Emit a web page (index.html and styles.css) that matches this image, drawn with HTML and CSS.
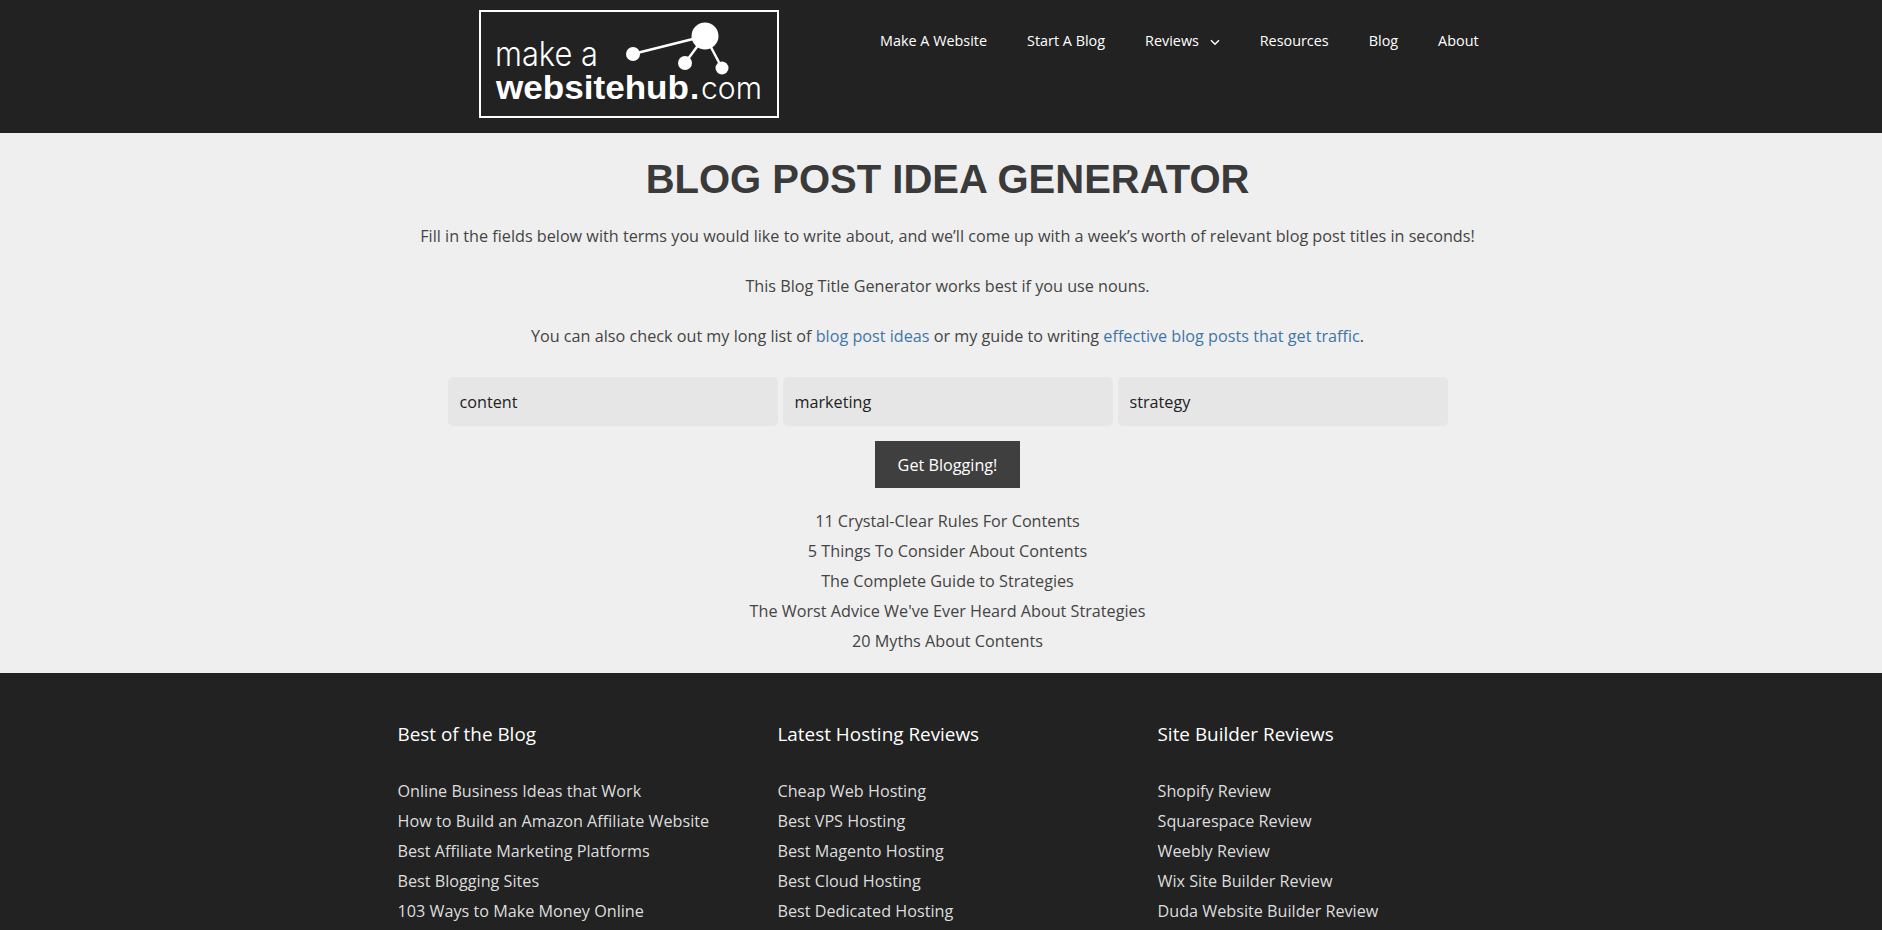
FILE: index.html
```html
<!DOCTYPE html>
<html>
    <head>
        <meta name='viewport' content='width=device-width, initial-scale=1.0'>
        <title>Blog Post Idea Generator</title>
        <link rel="stylesheet" href="styles.css">
    </head>
    <body>
        <header class="site-header">
            <a class="logo" href="#">
                <svg width="300" height="108" viewBox="0 0 300 108">
                    <rect x="1" y="1" width="298" height="106" fill="none" stroke="#fff" stroke-width="2"/>
                    <path d="M154 44L226 26M226 26L206 53M226 26L243 58" stroke="#fff" stroke-width="2.5" fill="none"/>
                    <circle cx="226" cy="26" r="13.5" fill="#fff"/>
                    <circle cx="154" cy="44" r="7" fill="#fff"/>
                    <circle cx="206" cy="53" r="7" fill="#fff"/>
                    <circle cx="243" cy="58" r="6.5" fill="#fff"/>
                    <text class="logo-light" x="16" y="56" font-size="34" textLength="103" lengthAdjust="spacingAndGlyphs">make a</text>
                    <text class="logo-bold" x="17" y="89" font-size="33" textLength="193" lengthAdjust="spacingAndGlyphs">websitehub</text>
                    <text class="logo-bold" x="211" y="89" font-size="33">.</text>
                    <text class="logo-light" x="222" y="89" font-size="31" textLength="61" lengthAdjust="spacingAndGlyphs">com</text>
                </svg>
            </a>
            <nav class="main-nav">
                <a href="#">Make A Website</a>
                <a href="#">Start A Blog</a>
                <a href="#" class="has-sub">Reviews
                    <svg width="10" height="7" viewBox="0 0 10 7"><path d="M1 1.2L5 5.2L9 1.2" stroke="#fff" stroke-width="1.5" fill="none"/></svg>
                </a>
                <a href="#">Resources</a>
                <a href="#">Blog</a>
                <a href="#">About</a>
            </nav>
        </header>
        <main class="generator">
            <h1>BLOG POST IDEA GENERATOR</h1>
            <p>Fill in the fields below with terms you would like to write about, and we’ll come up with a week’s worth of relevant blog post titles in seconds!</p>
            <p>This Blog Title Generator works best if you use nouns.</p>
            <p>You can also check out my long list of <a href="#">blog post ideas</a> or my guide to writing <a href="#">effective blog posts that get traffic</a>.</p>
            <div class="terms">
                <input type="text" value="content">
                <input type="text" value="marketing">
                <input type="text" value="strategy">
            </div>
            <button>Get Blogging!</button>
            <ul class="results">
                <li>11 Crystal-Clear Rules For Contents</li>
                <li>5 Things To Consider About Contents</li>
                <li>The Complete Guide to Strategies</li>
                <li>The Worst Advice We've Ever Heard About Strategies</li>
                <li>20 Myths About Contents</li>
            </ul>
        </main>
        <footer class="site-footer">
            <div class="foot-col">
                <h4>Best of the Blog</h4>
                <a href="#">Online Business Ideas that Work</a>
                <a href="#">How to Build an Amazon Affiliate Website</a>
                <a href="#">Best Affiliate Marketing Platforms</a>
                <a href="#">Best Blogging Sites</a>
                <a href="#">103 Ways to Make Money Online</a>
            </div>
            <div class="foot-col">
                <h4>Latest Hosting Reviews</h4>
                <a href="#">Cheap Web Hosting</a>
                <a href="#">Best VPS Hosting</a>
                <a href="#">Best Magento Hosting</a>
                <a href="#">Best Cloud Hosting</a>
                <a href="#">Best Dedicated Hosting</a>
            </div>
            <div class="foot-col">
                <h4>Site Builder Reviews</h4>
                <a href="#">Shopify Review</a>
                <a href="#">Squarespace Review</a>
                <a href="#">Weebly Review</a>
                <a href="#">Wix Site Builder Review</a>
                <a href="#">Duda Website Builder Review</a>
            </div>
        </footer>
    </body>
</html>
```
FILE: styles.css
```css
html, body {
    margin: 0;
    height: 930px;
    overflow: hidden;
}
body {
    font-family: "Open Sans", sans-serif;
    font-size: 16.2px;
    color: #444;
    background-color: #efefef;
}
a {
    text-decoration: none;
}
.site-header {
    display: flex;
    align-items: flex-start;
    height: 133px;
    padding-left: 479px;
    background-color: #222;
}
.logo {
    display: block;
    height: 108px;
    margin-top: 10px;
    margin-right: 101px;
}
.logo svg {
    display: block;
}
.logo text {
    fill: #fff;
}
.logo-light {
    font-family: Inter, sans-serif;
    font-weight: 300;
}
.logo-bold {
    font-family: "Liberation Sans", sans-serif;
    font-weight: 700;
}
.main-nav {
    display: flex;
    gap: 40px;
    padding-top: 31px;
}
.main-nav a {
    color: #fff;
    font-size: 14.4px;
    line-height: 20px;
}
.main-nav svg {
    margin-left: 7px;
}
.generator {
    height: 540px;
    padding: 18px 0 0 13px;
    box-sizing: border-box;
    text-align: center;
}
h1 {
    margin: 0 0 17px;
    font-family: "Liberation Sans", sans-serif;
    font-size: 40px;
    line-height: 56px;
    font-weight: 700;
    color: #3a3a3a;
}
.generator p {
    margin: 0 0 25.5px;
    line-height: 24.5px;
}
.generator p a {
    color: #3f76a8;
}
.terms {
    display: flex;
    justify-content: center;
    gap: 5px;
    margin-top: 28.5px;
}
.terms input {
    width: 330px;
    height: 49px;
    box-sizing: border-box;
    padding: 0 12px;
    border: 0;
    border-radius: 5px;
    background-color: #e6e6e6;
    color: #222;
    font-family: inherit;
    font-size: 16.2px;
}
button {
    display: block;
    width: 145px;
    height: 47px;
    margin: 15px auto 0;
    border: 0;
    background-color: #3f3f3f;
    color: #fff;
    font-family: inherit;
    font-size: 16.2px;
}
.results {
    margin: 18px 0 0;
    padding: 0;
    list-style: none;
}
.results li {
    line-height: 30px;
}
.site-footer {
    display: flex;
    height: 257px;
    box-sizing: border-box;
    padding: 46px 0 0 397.5px;
    background-color: #222;
}
.foot-col {
    width: 380px;
}
.foot-col h4 {
    margin: 0 0 27px;
    color: #fff;
    font-size: 18.9px;
    font-weight: 400;
    line-height: 30px;
}
.foot-col a {
    display: block;
    color: #ddd;
    font-size: 16.2px;
    line-height: 30px;
}
```
